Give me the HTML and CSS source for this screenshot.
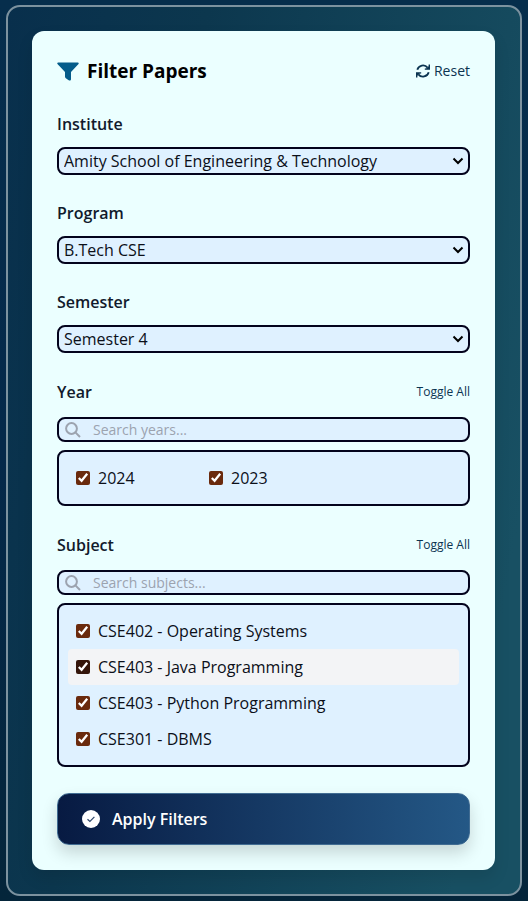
FILE: index.html
```html
<!DOCTYPE html>
<html lang="en">
<head>
<meta charset="utf-8">
<meta name="viewport" content="width=device-width, initial-scale=1">
<title>Filter Papers</title>
<link rel="stylesheet" href="styles.css">
</head>
<body>
<main class="frame">
  <form class="card">
    <header class="card-header">
      <h1 class="title">
        <svg class="funnel" viewBox="0 0 22 19" aria-hidden="true"><path d="M1.200.4H20.800C21.900.4 22 1.500 21.300 2.200L14 10V17.200C14 18.600 12.700 18.900 11.700 18.200L8.800 16.200C8.300 15.800 8 15.400 8 14.800V10L.7 2.200C0 1.500.1.4 1.200.4z"/></svg>
        Filter Papers
      </h1>
      <button type="reset" class="reset">
        <svg class="sync" viewBox="0 0 14 14" aria-hidden="true"><path d="M1.300 5.800A5.900 5.900 0 0 1 11.600 3.600M12.700 8.200A5.900 5.900 0 0 1 2.400 10.400" fill="none" stroke="#0b3451" stroke-width="1.800"/><path d="M14 .6V5.800H8.800V4.600L10.600 4.200 12.600 2.200V.6zM0 13.400V8.200H5.200V9.400L3.400 9.800 1.400 11.800V13.400z"/></svg>
        Reset
      </button>
    </header>

    <div class="field">
      <label class="label" for="institute">Institute</label>
      <select id="institute" class="select"><option>Amity School of Engineering &amp; Technology</option></select>
    </div>
    <div class="field">
      <label class="label" for="program">Program</label>
      <select id="program" class="select"><option>B.Tech CSE</option></select>
    </div>
    <div class="field">
      <label class="label" for="semester">Semester</label>
      <select id="semester" class="select"><option>Semester 4</option></select>
    </div>

    <section class="group">
      <div class="group-header">
        <label class="label" for="year-search">Year</label>
        <button type="button" class="toggle">Toggle All</button>
      </div>
      <div class="search">
        <svg class="glass" viewBox="0 0 16 16" aria-hidden="true"><circle cx="6.500" cy="6.500" r="5.400"/><path d="M10.400 10.400L15 15"/></svg>
        <input id="year-search" class="search-input" type="text" placeholder="Search years...">
      </div>
      <div class="options years">
        <label class="option"><input class="check" type="checkbox" checked>2024</label>
        <label class="option"><input class="check" type="checkbox" checked>2023</label>
      </div>
    </section>

    <section class="group">
      <div class="group-header">
        <label class="label" for="subject-search">Subject</label>
        <button type="button" class="toggle">Toggle All</button>
      </div>
      <div class="search">
        <svg class="glass" viewBox="0 0 16 16" aria-hidden="true"><circle cx="6.500" cy="6.500" r="5.400"/><path d="M10.400 10.400L15 15"/></svg>
        <input id="subject-search" class="search-input" type="text" placeholder="Search subjects...">
      </div>
      <div class="options">
        <label class="option"><input class="check" type="checkbox" checked>CSE402 - Operating Systems</label>
        <label class="option active"><input class="check" type="checkbox" checked>CSE403 - Java Programming</label>
        <label class="option"><input class="check" type="checkbox" checked>CSE403 - Python Programming</label>
        <label class="option"><input class="check" type="checkbox" checked>CSE301 - DBMS</label>
      </div>
    </section>

    <button type="button" class="apply">
      <svg class="badge" viewBox="0 0 18 18" aria-hidden="true"><circle cx="9" cy="9" r="9" fill="#fff"/><path d="M5.500 9.200l2.400 2.200 4.500-4.600" fill="none" stroke="#2c4569" stroke-width="1.200"/></svg>
      Apply Filters
    </button>
  </form>
</main>
</body>
</html>
```

FILE: styles.css
```css
* {
  box-sizing: border-box;
}

body {
  margin: 0;
  min-height: 100vh;
  padding: 5px 6px;
  background: linear-gradient(180deg, #062e4c, #05294a 50%, #04253a);
  color: #0b0f19;
  font-family: "Segoe UI", "Open Sans", "Noto Sans", sans-serif;
  font-size: 16px;
  line-height: 24px;
}

button,
input,
select {
  font: inherit;
  color: inherit;
}

button {
  border: 0;
  padding: 0;
  background: none;
  cursor: pointer;
}

.frame {
  padding: 24px 25px 24px 24px;
  border: 2px solid #7c929f;
  border-radius: 14px;
  background: linear-gradient(100deg, #082f4c, #0c374e 30%, #185063 90%);
}

.card {
  padding: 25px;
  border-radius: 12px;
  background: #ebffff;
  box-shadow: 0 8px 16px rgba(0, 0, 0, 0.1);
}

.card-header,
.group-header {
  display: flex;
  align-items: center;
  justify-content: space-between;
}

.card-header {
  height: 30px;
  margin-bottom: 26px;
}

.title {
  display: flex;
  align-items: center;
  gap: 8px;
  margin: 0;
  color: #000;
  font-size: 19px;
  font-weight: 700;
}

.funnel {
  width: 22px;
  height: 19px;
  fill: #045c8a;
}

.reset {
  display: flex;
  align-items: center;
  gap: 4px;
  color: #0b3451;
  font-size: 14px;
}

.sync {
  width: 14px;
  height: 14px;
  fill: #0b3451;
}

.label {
  color: #111a2c;
  font-weight: 600;
}

.field {
  display: flex;
  flex-direction: column;
  gap: 11px;
  margin-bottom: 26px;
}

.select {
  width: 100%;
  height: 28px;
  padding: 0 24px 0 5px;
  border: 2px solid #03031c;
  border-radius: 8px;
  appearance: none;
  background: #dff1ff url("data:image/svg+xml,%3Csvg xmlns='http://www.w3.org/2000/svg' width='12' height='8' viewBox='0 0 12 8'%3E%3Cpath d='M1.500 1.500L6 6L10.500 1.500' fill='none' stroke='%23000' stroke-width='2'/%3E%3C/svg%3E") no-repeat right 4px center;
}

.group {
  margin-bottom: 26px;
}

.group-header {
  height: 26px;
  margin-bottom: 12px;
}

.toggle {
  color: #0b3451;
  font-size: 12px;
}

.search {
  display: flex;
  align-items: center;
  gap: 12px;
  height: 25px;
  margin-bottom: 8px;
  padding: 0 6px;
  border: 2px solid #03031c;
  border-radius: 8px;
  background: #dff1ff;
}

.glass {
  flex: none;
  width: 16px;
  height: 16px;
  fill: none;
  stroke: #9ca3af;
  stroke-width: 2;
}

.search-input {
  flex: 1;
  min-width: 0;
  height: 20px;
  padding: 0;
  border: 0;
  outline: 0;
  background: none;
  font-size: 14px;
}

.search-input::placeholder {
  color: #9ca3af;
}

.options {
  padding: 8px 9px;
  border: 2px solid #03031c;
  border-radius: 8px;
  background: #dff1ff;
}

.years {
  display: grid;
  grid-template-columns: repeat(3, 1fr);
  gap: 8px;
}

.option {
  display: flex;
  align-items: center;
  gap: 8px;
  height: 36px;
  padding: 0 8px;
  border-radius: 4px;
}

.check {
  width: 14px;
  height: 14px;
  margin: 0;
  accent-color: #6a2a0d;
}

.active {
  background: #f3f4f6;
}

.active .check {
  accent-color: #34150a;
}

.apply {
  display: flex;
  align-items: center;
  gap: 12px;
  width: 100%;
  height: 52px;
  padding: 0 24px;
  border: 1px solid #416c92;
  border-radius: 12px;
  background: linear-gradient(90deg, #071a42, #245886) border-box;
  box-shadow: 0 8px 16px rgba(0, 0, 0, 0.16);
  color: #fff;
  font-size: 16px;
  font-weight: 600;
}

.badge {
  width: 18px;
  height: 18px;
}
```
